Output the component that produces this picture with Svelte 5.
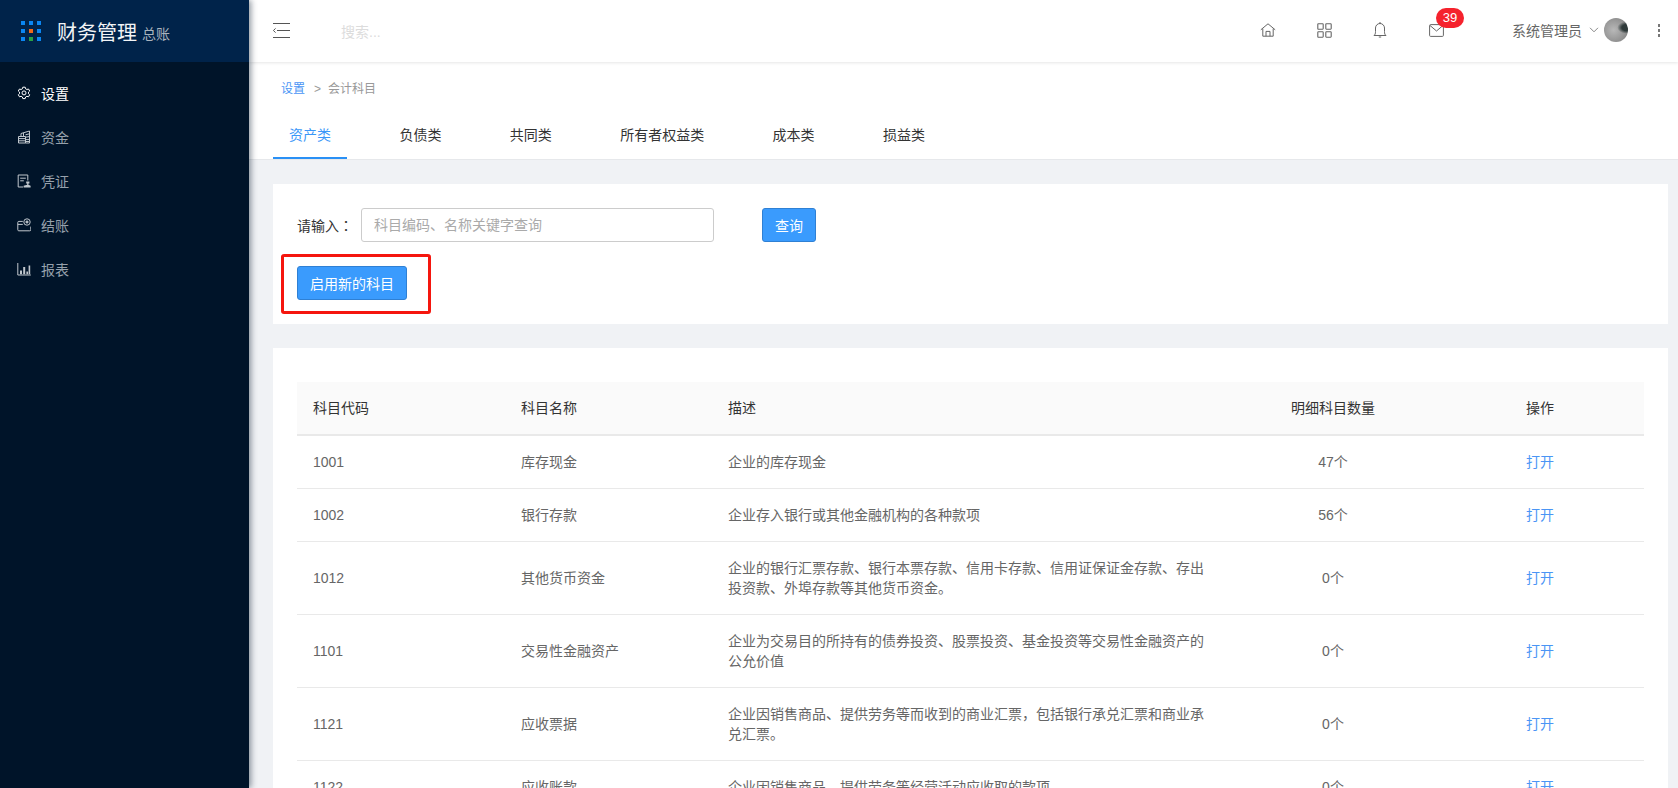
<script>
  const menu = [
    { label: '设置', icon: 'gear', active: true },
    { label: '资金', icon: 'fund' },
    { label: '凭证', icon: 'voucher' },
    { label: '结账', icon: 'close' },
    { label: '报表', icon: 'chart' }
  ];
  const tabs = ['资产类', '负债类', '共同类', '所有者权益类', '成本类', '损益类'];
  const rows = [
    ['1001', '库存现金', '企业的库存现金', '47个'],
    ['1002', '银行存款', '企业存入银行或其他金融机构的各种款项', '56个'],
    ['1012', '其他货币资金', '企业的银行汇票存款、银行本票存款、信用卡存款、信用证保证金存款、存出投资款、外埠存款等其他货币资金。', '0个'],
    ['1101', '交易性金融资产', '企业为交易目的所持有的债券投资、股票投资、基金投资等交易性金融资产的公允价值', '0个'],
    ['1121', '应收票据', '企业因销售商品、提供劳务等而收到的商业汇票，包括银行承兑汇票和商业承兑汇票。', '0个'],
    ['1122', '应收账款', '企业因销售商品、提供劳务等经营活动应收取的款项', '0个']
  ];
  const dots = ['b', 'b', 'b', 'b', 'o', 'b', 'b', 'g', 'b'];
</script>

<div class="shell">
  <aside class="side">
    <div class="brand">
      <div class="logo">
        {#each dots as d}<i class={d}></i>{/each}
      </div>
      <span class="title">财务管理</span>
      <span class="sub">总账</span>
    </div>
    <nav class="menu">
      {#each menu as m}
        <div class="item" class:active={m.active}>
          <svg viewBox="0 0 14 14" width="14" height="14" fill="none" stroke="currentColor" stroke-width="1">
            {#if m.icon === 'gear'}
              <path d="M5.8 1.2h2.4l.4 1.6 1.3.7 1.6-.5 1.2 2-1.2 1.1v1.6l1.2 1.1-1.2 2-1.6-.5-1.3.7-.4 1.6H5.8l-.4-1.6-1.3-.7-1.6.5-1.2-2 1.2-1.1V6.100L1.3 5l1.2-2 1.6.5 1.3-.7z"/>
              <circle cx="7" cy="6.900" r="2"/>
            {:else if m.icon === 'fund'}
              <path d="M1.500 6.500h7v6.500h-7zM1.500 8.600h7M1.500 10.800h7M4 6.500V3.500l8.500-2.500v12h-4M6.500 6.400V3M8.500 4.800l4-1M8.500 7.200l4-.6M8.500 9.600h4M8.500 11.500h4"/>
            {:else if m.icon === 'voucher'}
              <path d="M6 13H1.200V1h9.600v5.500M3.200 4.200h5.600M3.200 6.800h3.600"/>
              <path d="M6.600 13.400h7v-1.600l-2.200-1v-1.200h1V7.600H9.200v2h1v1.200l-3.600 1z" fill="currentColor" stroke="none"/>
            {:else if m.icon === 'close'}
              <path d="M5.800 3.400H1.800A1 1 0 0 0 .8 4.400v7.400a1 1 0 0 0 1 1h11a1 1 0 0 0 1-1V8.600M.8 6.400h5"/>
              <circle cx="10" cy="4" r="3.200"/>
              <circle cx="10" cy="4" r="1.100" fill="currentColor"/>
            {:else}
              <path d="M.8 1v12h13"/>
              <path d="M3 8.500h2v3.700H3zM6.200 5h2v7.200h-2zM9.400 9.500h1.600v2.700H9.400zM11.600 3.500h1.600v8.700h-1.600z" fill="currentColor" stroke="none"/>
            {/if}
          </svg>
          <span>{m.label}</span>
        </div>
      {/each}
    </nav>
  </aside>

  <div class="main">
    <header class="top">
      <svg class="burger" viewBox="0 0 18 15" width="18" height="15" fill="none" stroke="#555" stroke-width="1">
        <path d="M1 .5h17M5 7.500h13M1 14.500h17M3.600 5.400 1.400 7.500l2.200 2.100"/>
      </svg>
      <span class="search">搜索...</span>
      <div class="tools">
        <div class="tool">
          <svg viewBox="0 0 16 14" width="16" height="14" fill="none" stroke="#666" stroke-width="1">
            <path d="M.8 6.800 8 .8l7.200 6M2.800 5.600v7.600h10.400V5.600M6 13.200V8.400h4v4.800"/>
          </svg>
        </div>
        <div class="tool">
          <svg viewBox="0 0 15 15" width="15" height="15" fill="none" stroke="#666" stroke-width="1.100">
            <rect x=".8" y=".8" width="5.400" height="5.400" rx=".6"/>
            <rect x="8.800" y=".8" width="5.400" height="5.400" rx=".6"/>
            <rect x=".8" y="8.800" width="5.400" height="5.400" rx=".6"/>
            <rect x="8.800" y="8.800" width="5.400" height="5.400" rx=".6"/>
          </svg>
        </div>
        <div class="tool">
          <svg viewBox="0 0 14 16" width="14" height="16" fill="none" stroke="#666" stroke-width="1">
            <path d="M1 13.500c1.200-1 1.500-2 1.500-4V6a4.500 4.500 0 0 1 9 0v3.500c0 2 .3 3 1.500 4zM6 1.400 7 .6l1 .8M5.800 15h2.400"/>
          </svg>
        </div>
        <div class="tool">
          <svg viewBox="0 0 15 13" width="15" height="13" fill="none" stroke="#666" stroke-width="1">
            <rect x=".6" y=".6" width="13.800" height="11.800" rx="1"/>
            <path d="m1 1.500 6.500 5.500L14 1.500"/>
          </svg>
          <span class="badge">39</span>
        </div>
      </div>
      <span class="user">系统管理员</span>
      <svg class="chev" viewBox="0 0 10 6" width="10" height="6" fill="none" stroke="#888" stroke-width="1"><path d="m1 .8 4 4 4-4"/></svg>
      <div class="avatar"></div>
      <div class="more"><i></i><i></i><i></i></div>
    </header>

    <div class="head">
      <div class="crumb"><span class="link">设置</span><span class="sep">&gt;</span><span>会计科目</span></div>
      <div class="tabs">
        {#each tabs as t, i}
          <div class="tab" class:on={i === 0}>{t}</div>
        {/each}
      </div>
    </div>

    <div class="body">
      <section class="card filter">
        <div class="line">
          <label for="kw">请输入<span class="colon">：</span></label>
          <input id="kw" placeholder="科目编码、名称关键字查询" />
          <button class="query">查询</button>
        </div>
        <div class="enable">
          <button>启用新的科目</button>
          <div class="mark"></div>
        </div>
      </section>

      <section class="card list">
        <table>
          <colgroup>
            <col class="c1" /><col class="c2" /><col /><col class="c4" /><col class="c5" />
          </colgroup>
          <thead>
            <tr><th>科目代码</th><th>科目名称</th><th>描述</th><th class="mid">明细科目数量</th><th class="mid">操作</th></tr>
          </thead>
          <tbody>
            {#each rows as r}
              <tr>
                <td>{r[0]}</td>
                <td>{r[1]}</td>
                <td>{r[2]}</td>
                <td class="mid">{r[3]}</td>
                <td class="mid link">打开</td>
              </tr>
            {/each}
          </tbody>
        </table>
      </section>
    </div>
  </div>
</div>

<style>
  :global(body) {
    margin: 0;
    overflow: hidden;
  }
  .shell {
    display: flex;
    height: 100vh;
    overflow: hidden;
    background: #f0f2f5;
    font-family: "Liberation Sans", "Noto Sans CJK SC", sans-serif;
    font-size: 14px;
    color: #666;
  }
  .side {
    width: 249px;
    flex: none;
    background: #001429;
    box-shadow: 2px 0 6px rgba(0, 21, 41, 0.45);
    position: relative;
    z-index: 2;
  }
  .brand {
    height: 62px;
    background: #00234a;
    display: flex;
    align-items: center;
    padding-left: 21px;
  }
  .logo {
    display: grid;
    grid-template-columns: repeat(3, 4px);
    grid-auto-rows: 4px;
    gap: 4px;
  }
  .logo i { display: block; }
  .logo .b { background: #0a86f2; }
  .logo .o { background: #f0691c; }
  .logo .g { background: #27a243; }
  .title {
    margin-left: 16px;
    font-size: 20px;
    color: #f2f4f6;
  }
  .sub {
    margin-left: 5px;
    margin-top: 4px;
    color: #a9b3bd;
  }
  .menu { padding-top: 9px; }
  .item {
    height: 44px;
    display: flex;
    align-items: center;
    padding-left: 17px;
    color: #96a1ac;
  }
  .item span { margin-left: 10px; }
  .item svg { color: #c0c7cd; }
  .item.active, .item.active svg { color: #fff; }
  .main {
    flex: 1;
    min-width: 0;
  }
  .top {
    box-sizing: border-box;
    height: 62px;
    background: #fff;
    display: flex;
    align-items: center;
    box-shadow: 0 1px 3px rgba(0, 0, 0, 0.1);
    position: relative;
    padding: 0 0 2px 23px;
  }
  .burger { flex: none; }
  .search {
    margin-left: 51px;
    margin-top: 1px;
    color: #dcdcdc;
  }
  .tools {
    display: flex;
    margin-left: auto;
  }
  .tool {
    width: 56px;
    display: flex;
    align-items: center;
    justify-content: center;
    position: relative;
  }
  .badge {
    position: absolute;
    left: 28px;
    top: -14px;
    width: 28px;
    height: 20px;
    line-height: 20px;
    border-radius: 10px;
    background: #f5222d;
    color: #fff;
    font-size: 13px;
    text-align: center;
  }
  .user { margin-left: 48px; color: #666; }
  .chev { margin-left: 7px; flex: none; }
  .avatar {
    width: 24px;
    height: 24px;
    margin-left: 5px;
    border-radius: 50%;
    background:
      radial-gradient(ellipse at 96% 40%, #2f3a3a 0 16%, transparent 30%),
      radial-gradient(circle at 40% 50%, #b8b8b8 0%, #8e8e8e 70%, #666 100%);
  }
  .more {
    display: flex;
    flex-direction: column;
    gap: 2px;
    margin-left: 30px;
    margin-right: 18px;
  }
  .more i {
    width: 2px;
    height: 3px;
    background: #777;
  }
  .head {
    background: #fff;
    border-bottom: 1px solid #e6e8eb;
    padding-top: 17px;
  }
  .crumb {
    padding-left: 32px;
    font-size: 12px;
    line-height: 20px;
    color: #999;
  }
  .link { color: #4a95f5; }
  .sep { margin: 0 7px 0 9px; }
  .tabs {
    display: flex;
    gap: 36.4px;
    margin: 14px 0 0 24px;
  }
  .tab {
    box-sizing: border-box;
    height: 46px;
    line-height: 44px;
    padding: 0 16px;
    color: #333;
  }
  .tab.on {
    color: #3a97f8;
    border-bottom: 2px solid #2a90f5;
  }
  .body {
    padding: 24px 10px 0 24px;
  }
  .card { background: #fff; }
  .filter {
    padding: 24px;
    margin-bottom: 24px;
  }
  .line {
    display: flex;
    align-items: center;
  }
  label {
    width: 64px;
    color: #333;
    white-space: nowrap;
  }
  .colon { font-family: "Noto Sans CJK TC", sans-serif; }
  input {
    box-sizing: border-box;
    width: 353px;
    height: 34px;
    padding: 0 11px 0 12px;
    border: 1px solid #ccc;
    border-radius: 3px;
    font: inherit;
    outline: none;
  }
  input::placeholder { color: #aaa; }
  button {
    box-sizing: border-box;
    height: 34px;
    padding: 0 11px;
    border: 1px solid #2f80d4;
    border-radius: 3px;
    background: #3a9bfd;
    color: #fff;
    font: inherit;
  }
  .query {
    width: 54px;
    margin-left: 48px;
    padding: 0;
  }
  .enable {
    position: relative;
    width: 110px;
    margin-top: 24px;
  }
  .enable button { display: block; width: 110px; padding: 0; }
  .mark {
    position: absolute;
    left: -16px;
    right: -24px;
    top: -12px;
    bottom: -14px;
    border: 3px solid #f5160e;
    border-radius: 3px;
  }
  .list {
    padding: 34px 24px 0;
  }
  table {
    width: 100%;
    table-layout: fixed;
    border-collapse: separate;
    border-spacing: 0;
  }
  .c1 { width: 208px; }
  .c2 { width: 207px; }
  .c4 { width: 206px; }
  .c5 { width: 208px; }
  th, td {
    padding: 16px;
    line-height: 20px;
    border-bottom: 1px solid #e9e9e9;
    text-align: left;
    font-weight: normal;
  }
  th {
    background: #fafafa;
    border-bottom-width: 2px;
    color: #333;
  }
  td.link { color: #4a95f5; }
  .mid { text-align: center; }
</style>
